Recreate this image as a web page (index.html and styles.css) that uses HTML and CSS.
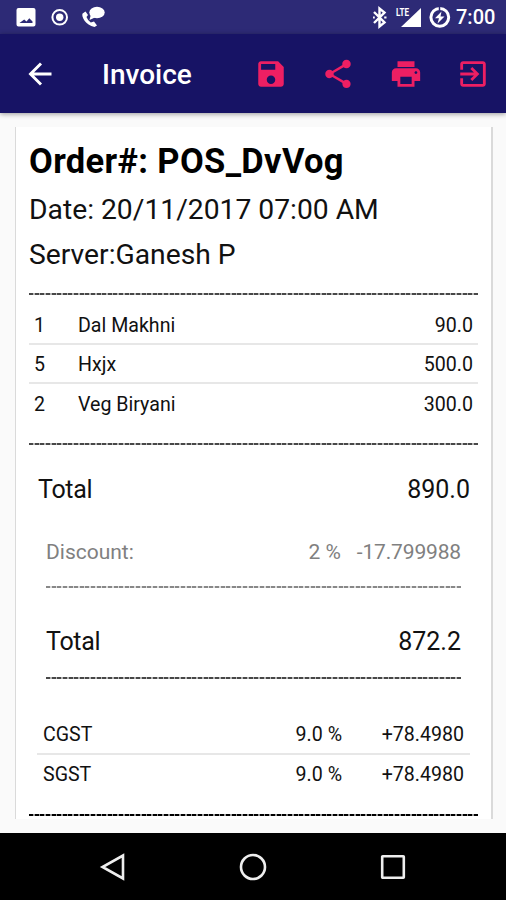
FILE: index.html
```html
<!DOCTYPE html>
<html lang="en">
<head>
<meta charset="utf-8">
<title>Invoice</title>
<link rel="stylesheet" href="styles.css">
</head>
<body>
<div class="status">
  <svg class="status-left" width="100" height="34" viewBox="0 0 100 34" fill="#fff">
    <path fill-rule="evenodd" d="M18.500 8H33.500Q35.500 8 35.500 10V24.500Q35.500 26.500 33.500 26.500H18.500Q16.500 26.500 16.500 24.500V10Q16.500 8 18.500 8ZM19.500 23H32.500V21.500L29.300 18.300L26.500 21.500L24.200 19.500L19.500 23Z"/>
    <circle cx="59.700" cy="17.300" r="7.300" fill="none" stroke="#fff" stroke-width="2"/>
    <circle cx="59.700" cy="17.300" r="3.700"/>
    <path d="M82.600 13.500C81 16 85.500 25.500 94.500 27L97 25.500L94 21.500L90.800 22.500Q87.500 20 86.500 17L88 15L85.500 11.500Z"/>
    <ellipse cx="97" cy="12.500" rx="7.700" ry="5.800"/>
    <path d="M91 14L89.500 20L96 17Z"/>
  </svg>
  <svg class="status-right" width="86" height="34" viewBox="0 0 86 34">
    <path d="M3 12L13.500 22.500L8.500 26.500V8.500L13.500 12.500L3 23" fill="none" stroke="#fff" stroke-width="2.400"/>
    <path d="M2 17.500H3.800M13.200 17.500H15.500" stroke="#fff" stroke-width="2"/>
    <path d="M50 8V27H30Z" fill="#fff"/>
    <text class="lte" x="25" y="16" textLength="13" lengthAdjust="spacingAndGlyphs">LTE</text>
    <circle cx="68.800" cy="17.300" r="8.900" fill="none" stroke="#fff" stroke-width="3"/>
    <path d="M68.500 6V10.500" stroke="#2d2a76" stroke-width="1.500"/>
    <path d="M70.500 11.500L64 18.200H68L66.500 23.500L73.500 16.500H69.500Z" fill="#fff"/>
  </svg>
  <span class="clock">7:00</span>
</div>
<header class="appbar">
  <svg class="back" width="24" height="24" viewBox="0 0 24 24" fill="none" stroke="#fff" stroke-width="2.900"><path d="M23.500 12H2M13 1.500L2.500 12L13 22.500"/></svg>
  <h1>Invoice</h1>
  <div class="actions">
    <svg viewBox="0 0 24 24"><path d="M17 3H5c-1.110 0-2 .9-2 2v14c0 1.100.89 2 2 2h14c1.100 0 2-.9 2-2V7l-4-4zm-5 16c-1.660 0-3-1.340-3-3s1.340-3 3-3 3 1.340 3 3-1.340 3-3 3zm3-10H5V5h10v4z"/></svg>
    <svg viewBox="0 0 24 24"><path d="M18 16.080c-.76 0-1.440.3-1.960.77L8.910 12.700c.05-.23.09-.46.09-.7s-.04-.47-.09-.7l7.050-4.110c.54.5 1.250.81 2.040.81 1.660 0 3-1.340 3-3s-1.340-3-3-3-3 1.340-3 3c0 .24.04.47.09.7L8.040 9.810C7.500 9.310 6.790 9 6 9c-1.660 0-3 1.340-3 3s1.340 3 3 3c.79 0 1.500-.31 2.040-.81l7.120 4.160c-.05.21-.08.43-.08.65 0 1.610 1.310 2.920 2.920 2.920s2.920-1.310 2.920-2.920-1.310-2.920-2.920-2.920z"/></svg>
    <svg viewBox="0 0 24 24"><path d="M19 8H5c-1.660 0-3 1.340-3 3v6h4v4h12v-4h4v-6c0-1.660-1.340-3-3-3zm-3 11H8v-5h8v5zm3-7c-.55 0-1-.45-1-1s.45-1 1-1 1 .45 1 1-.45 1-1 1zm-1-9H6v4h12V3z"/></svg>
    <svg viewBox="0 0 24 24"><path d="M10.090 15.590L11.500 17l5-5-5-5-1.410 1.410L12.670 11H3v2h9.670l-2.580 2.590zM19 3H5c-1.110 0-2 .9-2 2v4h2V5h14v14H5v-4H3v4c0 1.100.89 2 2 2h14c1.100 0 2-.9 2-2V5c0-1.100-.9-2-2-2z"/></svg>
  </div>
</header>
<main class="page">
  <section class="card">
    <h2>Order#: POS_DvVog</h2>
    <p class="date">Date: 20/11/2017 07:00 AM</p>
    <p class="server">Server:Ganesh P</p>
    <div class="dash"></div>
    <div class="items">
      <div class="item"><span>1</span><span>Dal Makhni</span><span class="num">90.0</span></div>
      <div class="item"><span>5</span><span>Hxjx</span><span class="num">500.0</span></div>
      <div class="item"><span>2</span><span>Veg Biryani</span><span class="num">300.0</span></div>
    </div>
    <div class="dash"></div>
    <div class="total gross"><span class="label">Total</span><span>890.0</span></div>
    <div class="inner">
      <div class="discount"><span class="label">Discount:</span><span class="rate">2 %</span><span class="amount">-17.799988</span></div>
      <div class="dash light"></div>
      <div class="total net"><span class="label">Total</span><span>872.2</span></div>
      <div class="dash"></div>
    </div>
    <div class="taxes">
      <div class="tax"><span class="label">CGST</span><span class="rate">9.0 %</span><span class="amount">+78.4980</span></div>
      <div class="tax"><span class="label">SGST</span><span class="rate">9.0 %</span><span class="amount">+78.4980</span></div>
    </div>
    <div class="dash strong"></div>
  </section>
</main>
<nav class="navbar">
  <svg viewBox="0 0 28 28"><path d="M24 2.500V25.500L3.500 14Z"/></svg>
  <svg viewBox="0 0 28 28"><circle cx="14" cy="14" r="12"/></svg>
  <svg viewBox="0 0 28 28"><rect x="3.200" y="3.200" width="21.600" height="21.600" rx=".5"/></svg>
</nav>
</body>
</html>
```

FILE: styles.css
```css
* { box-sizing: border-box; }
body {
  margin: 0;
  width: 506px;
  height: 900px;
  display: flex;
  flex-direction: column;
  overflow: hidden;
  font-family: Roboto, "Liberation Sans", sans-serif;
  color: #111;
  background: #fafafa;
}
h1, h2, p { margin: 0; white-space: nowrap; }
svg { display: block; flex: none; }

.status {
  height: 34px;
  flex: none;
  display: flex;
  align-items: center;
  background: #2d2a76;
  color: #fff;
}
.status-left { overflow: visible; }
.status-right { margin-left: 271px; }
.lte { font: 700 10.500px Roboto, sans-serif; fill: #fff; }
.clock { font-size: 20px; font-weight: 500; line-height: 36px; width: 40px; margin-left: -1px; white-space: nowrap; }

.appbar {
  height: 79px;
  flex: none;
  display: flex;
  align-items: center;
  padding: 0 16px 0 28px;
  background: #171365;
  color: #fff;
  position: relative;
  box-shadow: 0 1px 5px rgba(0, 0, 0, .4);
}
.appbar h1 { margin-left: 50px; font-size: 28px; font-weight: 500; line-height: 38px; margin-top: 3px; }
.actions { margin-left: auto; display: flex; gap: 33.500px; }
.actions svg { width: 34px; height: 34px; fill: #ed1f63; }

.page { height: 720px; flex: none; padding: 14px 13px 14px 15px; }
.card {
  height: 692px;
  padding: 9px 13px 0 13px;
  border: solid #dadada;
  border-width: 0 2px 0 1px;
  background: #fff;
  display: flex;
  flex-direction: column;
}
h2 { height: 49px; line-height: 51px; font-size: 34.500px; letter-spacing: .35px; font-weight: 700; color: #000; }
.date { height: 47px; line-height: 49px; font-size: 28.250px; }
.server { height: 61px; line-height: 46px; font-size: 28.250px; }

.dash {
  height: 2px;
  flex: none;
  background: repeating-linear-gradient(90deg, #484848 0 4px, #b5b5b5 4px 5.630px);
}
.dash.light { background: repeating-linear-gradient(90deg, #888 0 4px, #ddd 4px 5.630px); }
.dash.strong { background: repeating-linear-gradient(90deg, #000 0 4px, #999 4px 5.630px); }

.items { height: 148px; padding-top: 10px; font-size: 19.600px; }
.item {
  display: grid;
  grid-template-columns: 44px 1fr auto;
  height: 39px;
  line-height: 40px;
  padding: 0 5px;
}
.item:first-child { height: 38px; line-height: 41px; }
.item:last-child { line-height: 42px; }
.item + .item, .tax + .tax { border-top: 2px solid #e7e7e7; }
.total { display: flex; justify-content: space-between; font-size: 25px; }
.total .label { letter-spacing: -.3px; }
.gross { height: 78px; line-height: 90px; padding: 0 8px 0 9px; }
.inner { margin: 0 17px; }
.discount, .tax { display: grid; grid-template-columns: 1fr auto 120px; }
.amount { text-align: right; }
.discount { height: 63px; line-height: 58px; font-size: 21px; color: #808080; }
.discount .amount { letter-spacing: -.15px; }
.net { height: 89px; line-height: 107px; }
.taxes { margin: 0 8px; padding-top: 36px; height: 135px; font-size: 19.600px; }
.tax { height: 39px; line-height: 40px; padding: 0 6px; grid-template-columns: 1fr auto 122px; }
.tax:first-child { height: 38px; line-height: 39px; }

.navbar {
  height: 67px;
  flex: none;
  display: flex;
  justify-content: center;
  align-items: center;
  gap: 112px;
  background: #000;
}
.navbar svg { width: 28px; height: 28px; fill: none; stroke: #eee; stroke-width: 2.600; }
```
